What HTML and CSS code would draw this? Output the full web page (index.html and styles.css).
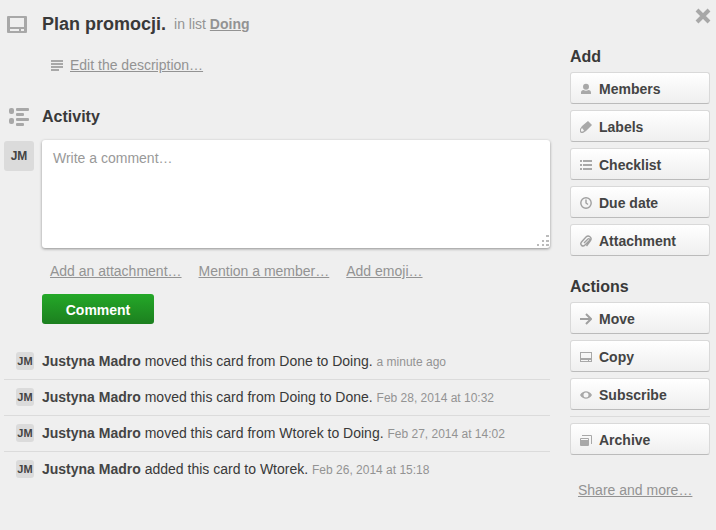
FILE: index.html
```html
<!DOCTYPE html>
<html lang="en">
<head>
    <meta charset="UTF-8">
    <meta name="viewport" content="width=device-width, initial-scale=1.0">
    <title>Plan promocji.</title>
    <link rel="stylesheet" href="styles.css">
</head>
<body>
    <button class="close" aria-label="Close">
        <svg width="16" height="16" viewBox="0 0 16 16"><path d="M2 2l12 12M14 2L2 14" fill="none" stroke="#a8a8a8" stroke-width="4"/></svg>
    </button>

    <div class="card">
        <main class="main">
            <header class="card-header">
                <svg class="icon-large" width="20" height="17" viewBox="0 0 20 17"><path fill-rule="evenodd" d="M1 0h18a1 1 0 0 1 1 1v15a1 1 0 0 1-1 1H1a1 1 0 0 1-1-1V1a1 1 0 0 1 1-1zM3 2v9h14V2zM3 13v2h9v-2zM14 13v2h3v-2z"/></svg>
                <h1>Plan promocji.</h1>
                <p class="quiet">in list <a href="#"><strong>Doing</strong></a></p>
            </header>

            <div class="description">
                <svg width="12" height="11" viewBox="0 0 12 11"><path d="M0 0h12v2H0zM0 3h12v2H0zM0 6h12v2H0zM0 9h8v2H0z"/></svg>
                <a href="#">Edit the description…</a>
            </div>

            <div class="section-title">
                <svg width="22" height="20" viewBox="0 0 22 20">
                    <rect x="1" y="1" width="5" height="6" rx="2"/><rect x="1" y="11" width="5" height="6" rx="2"/>
                    <rect x="8" y="1" width="13" height="3" rx="1"/><rect x="8" y="6" width="8" height="3" rx="1"/>
                    <rect x="8" y="11" width="13" height="3" rx="1"/><rect x="8" y="16" width="8" height="3" rx="1"/>
                </svg>
                <h2>Activity</h2>
            </div>

            <form class="new-comment">
                <span class="avatar">JM</span>
                <div class="comment-body">
                    <div class="comment-box">
                        <textarea aria-label="Write a comment" placeholder="Write a comment…"></textarea>
                        <svg class="grip" width="12" height="12" viewBox="0 0 12 12"><path d="M9 0h3v2H9zM5 5h2v2H5zM9 5h3v2H9zM0 9h2v2H0zM5 9h2v2H5zM9 9h3v2H9z"/></svg>
                    </div>
                    <div class="comment-links">
                        <a href="#">Add an attachment…</a>
                        <a href="#">Mention a member…</a>
                        <a href="#">Add emoji…</a>
                    </div>
                    <button type="button" class="primary">Comment</button>
                </div>
            </form>

            <ul class="activity">
                <li><span class="avatar small">JM</span><p><strong>Justyna Madro</strong> moved this card from Done to Doing. <time>a minute ago</time></p></li>
                <li><span class="avatar small">JM</span><p><strong>Justyna Madro</strong> moved this card from Doing to Done. <time>Feb 28, 2014 at 10:32</time></p></li>
                <li><span class="avatar small">JM</span><p><strong>Justyna Madro</strong> moved this card from Wtorek to Doing. <time>Feb 27, 2014 at 14:02</time></p></li>
                <li><span class="avatar small">JM</span><p><strong>Justyna Madro</strong> added this card to Wtorek. <time>Feb 26, 2014 at 15:18</time></p></li>
            </ul>
        </main>

        <aside class="sidebar">
            <section>
                <h3>Add</h3>
                <button class="side-button">
                    <svg width="12" height="12" viewBox="0 0 12 12"><circle cx="6" cy="3.800" r="3"/><path d="M1 11V9.500C1 8 2 7 3.500 7c1.500 1 3.500 1 5 0C10 7 11 8 11 9.500V11z"/></svg>
                    Members
                </button>
                <button class="side-button">
                    <svg width="12" height="12" viewBox="0 0 12 12"><path fill-rule="evenodd" d="M8 0l4 4-6 6-3 2H1l-1-1V8l2-3zM2 7L1 8.500v2h2L4 9.500z"/></svg>
                    Labels
                </button>
                <button class="side-button">
                    <svg width="12" height="10" viewBox="0 0 12 10"><path d="M0 0h2v2H0zM3 0h9v2H3zM0 4h2v2H0zM3 4h9v2H3zM0 8h2v2H0zM3 8h9v2H3z"/></svg>
                    Checklist
                </button>
                <button class="side-button">
                    <svg class="line" width="12" height="12" viewBox="0 0 12 12"><circle cx="6" cy="6" r="5.200"/><path d="M6 2.500V6l2 1.500"/></svg>
                    Due date
                </button>
                <button class="side-button">
                    <svg class="line" width="12" height="12" viewBox="0 0 12 12"><path d="M4 8l4-4c1-1 2.500.5 1.500 1.500L5 10c-2.500 2.500-5.500-.5-3.500-3l4.500-5c2.500-2.500 6.500.5 4.500 3.500L6.500 11"/></svg>
                    Attachment
                </button>
            </section>

            <section>
                <h3>Actions</h3>
                <button class="side-button">
                    <svg class="line arrow" width="12" height="12" viewBox="0 0 12 12"><path d="M0 6h11M6 1l5 5-5 5"/></svg>
                    Move
                </button>
                <button class="side-button">
                    <svg width="12" height="10" viewBox="0 0 12 10"><path fill-rule="evenodd" d="M0 0h12v10H0zM1 1v5h10V1zM1 8v1h7V8zM9 8v1h2V8z"/></svg>
                    Copy
                </button>
                <button class="side-button">
                    <svg width="12" height="8" viewBox="0 0 12 8"><path fill-rule="evenodd" d="M0 4c3-5 9-5 12 0-3 5-9 5-12 0zM6 1.500a2.500 2.500 0 0 0 0 5 2.500 2.500 0 0 0 0-5z"/></svg>
                    Subscribe
                </button>
                <hr>
                <button class="side-button">
                    <svg width="12" height="12" viewBox="0 0 12 12"><path fill-rule="evenodd" d="M2 1h9a1 1 0 0 1 1 1v8h-1V2H2zM1 4h7a1 1 0 0 1 1 1v6a1 1 0 0 1-1 1H1a1 1 0 0 1-1-1V5a1 1 0 0 1 1-1zM1 5v1h7V5z"/></svg>
                    Archive
                </button>
            </section>

            <a class="share" href="#">Share and more…</a>
        </aside>
    </div>
</body>
</html>
```
FILE: styles.css
```css
* {
    box-sizing: border-box;
}

body {
    margin: 0;
    background-color: #efefef;
    color: #393939;
    font-family: "Liberation Sans", Arial, sans-serif;
    font-size: 14px;
    line-height: 18px;
}

h1, h2, h3, p, ul {
    margin: 0;
    padding: 0;
}

h1 {
    font-size: 18px;
    line-height: 24px;
}

h2, h3 {
    font-size: 16px;
    line-height: 22px;
}

a, .quiet {
    color: #939393;
}

svg {
    display: block;
    flex: none;
    fill: #a8a8a8;
}

.line {
    fill: none;
    stroke: #a0a0a0;
    stroke-width: 1.4;
}

.arrow {
    stroke-width: 2;
}

button {
    font-family: inherit;
    cursor: pointer;
}

.close {
    position: absolute;
    top: 8px;
    right: 5px;
    padding: 0;
    border: none;
    background: none;
}

.card {
    display: flex;
    gap: 20px;
    padding: 12px 6px 12px 4px;
}

.main {
    flex: 1;
    min-width: 0;
}

.card-header {
    display: flex;
    align-items: center;
    gap: 8px;
}

.icon-large {
    margin: 0 7px 0 3px;
}

.description {
    display: flex;
    align-items: center;
    gap: 7px;
    margin: 20px 0 0 47px;
}

.section-title {
    display: flex;
    align-items: center;
    gap: 12px;
    margin: 32px 0 12px 4px;
}

.new-comment {
    display: flex;
    align-items: flex-start;
    gap: 8px;
}

.comment-body {
    flex: 1;
}

.avatar {
    flex: none;
    width: 30px;
    margin-top: 1px;
    border-radius: 3px;
    background-color: #dbdbdb;
    color: #444;
    font-size: 12px;
    font-weight: bold;
    line-height: 30px;
    text-align: center;
}

.avatar.small {
    width: 18px;
    height: 18px;
    margin: 0;
    font-size: 11px;
    line-height: 18px;
}

.comment-box {
    position: relative;
}

textarea {
    display: block;
    width: 100%;
    height: 108px;
    padding: 9px 11px;
    border: none;
    border-radius: 3px;
    background-color: white;
    box-shadow: 0 1px 3px rgba(0, 0, 0, 0.4);
    color: #393939;
    font: inherit;
    resize: none;
}

textarea::placeholder {
    color: #999;
}

.grip {
    position: absolute;
    right: 1px;
    bottom: 1px;
    fill: #bbb;
}

.comment-links {
    display: flex;
    gap: 17px;
    margin: 14px 8px;
}

.primary {
    display: block;
    width: 112px;
    height: 30px;
    padding: 2px 0 0;
    border: none;
    border-radius: 3px;
    background: linear-gradient(#24a828, #1c7f1f);
    color: white;
    font-size: 14px;
    font-weight: bold;
}

.activity {
    margin-top: 20px;
    list-style: none;
}

.activity li {
    display: flex;
    gap: 8px;
    height: 36px;
    padding: 8px 0 0 12px;
    border-bottom: 1px solid #dbdbdb;
}

.activity li:last-child {
    border-bottom: none;
}

.activity strong {
    color: #444;
}

time {
    color: #939393;
    font-size: 12px;
}

.sidebar {
    width: 140px;
    padding-top: 34px;
}

.sidebar section {
    margin-bottom: 20px;
}

.sidebar h3 {
    margin-bottom: 4px;
}

.side-button {
    display: flex;
    align-items: center;
    gap: 7px;
    width: 100%;
    height: 32px;
    margin-bottom: 6px;
    padding: 1px 9px 0;
    border: 1px solid #d9d9d9;
    border-bottom-color: #bbb;
    border-radius: 3px;
    background: linear-gradient(#fff, #efefef);
    color: #444;
    font-size: 14px;
    font-weight: bold;
}

hr {
    margin: 0 0 6px;
    border: none;
    border-top: 1px solid #dbdbdb;
}

.share {
    display: block;
    margin: 26px 0 0 8px;
}
```
